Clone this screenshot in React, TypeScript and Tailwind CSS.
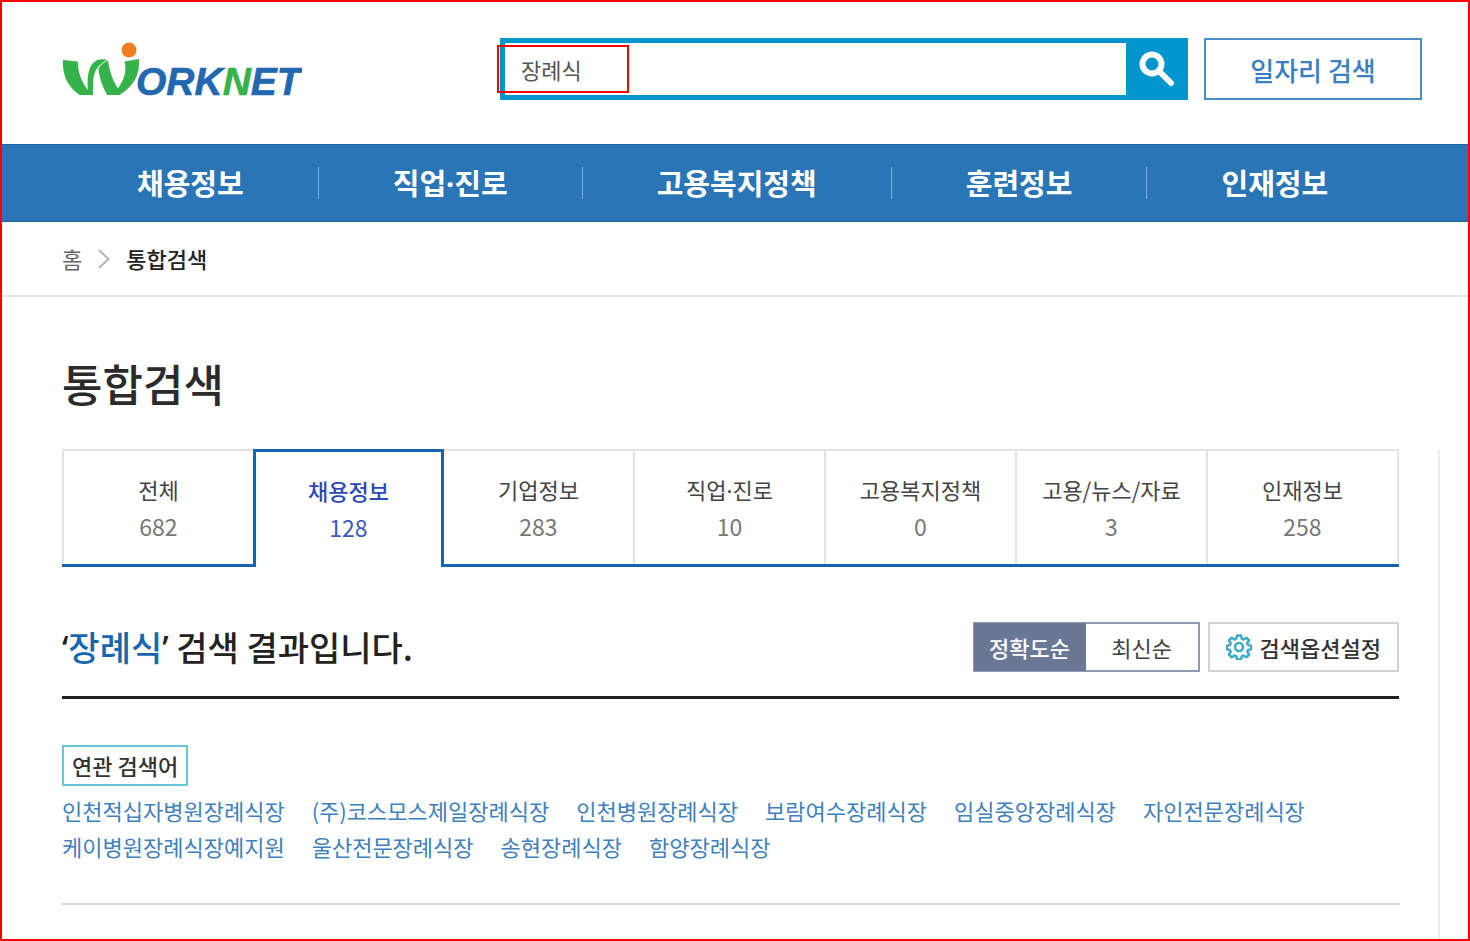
import React from 'react';

interface Tab {
  label: string;
  count: number;
}

const menus = ['채용정보', '직업·진로', '고용복지정책', '훈련정보', '인재정보'];

const tabs: Tab[] = [
  { label: '전체', count: 682 },
  { label: '채용정보', count: 128 },
  { label: '기업정보', count: 283 },
  { label: '직업·진로', count: 10 },
  { label: '고용복지정책', count: 0 },
  { label: '고용/뉴스/자료', count: 3 },
  { label: '인재정보', count: 258 },
];

const activeTab = '채용정보';

const related = [
  '인천적십자병원장례식장',
  '(주)코스모스제일장례식장',
  '인천병원장례식장',
  '보람여수장례식장',
  '임실중앙장례식장',
  '자인전문장례식장',
  '케이병원장례식장예지원',
  '울산전문장례식장',
  '송현장례식장',
  '함양장례식장',
];

const Logo: React.FC = () => (
  <svg width="240" height="60" viewBox="0 0 240 60" role="img" aria-label="WORKNET">
    <g fill="#36b24a">
      <path d="M1 18 L15.700 19.500 C16 30 19.500 40 26 48 C24.500 31 28 17.300 40 17.300 L45.500 17.800 C36.500 22.500 31.800 29 31.300 38 L31 53 L17.500 53 C5 44 0 32 1 18 Z" />
      <path d="M36.500 26.500 C38.500 23 41.500 20.500 46 18.500 C47.500 29 50.500 38 56 46.500 C62.500 37 65 29 62.500 19.500 L77 17 C78 33 72 44 57.500 53 L45 53 C40 43 37 35 36.500 26.500 Z" />
    </g>
    <circle cx="67" cy="8" r="7.500" fill="#f47b20" />
    <text x="74" y="53" fontFamily="Liberation Sans, sans-serif" fontSize="39" fontWeight="700" fontStyle="italic" fill="#2367b1" stroke="#2367b1" strokeWidth="0.600">
      ORK<tspan fill="#36b24a" stroke="#36b24a">N</tspan>ET
    </text>
  </svg>
);

const SearchIcon: React.FC = () => (
  <svg width="38" height="38" viewBox="0 0 38 38" fill="none" stroke="#fff" strokeLinecap="round" aria-hidden="true">
    <circle cx="14" cy="14" r="9.500" strokeWidth="6" />
    <path d="M22.500 22.500 L33 33" strokeWidth="6" />
  </svg>
);

const GearIcon: React.FC = () => (
  <svg width="26" height="26" viewBox="0 0 26 26" fill="none" stroke="#3fa9cc" strokeWidth="2.500" strokeLinejoin="round" aria-hidden="true">
    <path d="M11 1.500h4l.7 3.200 1.800.8 2.800-1.800 2.800 2.800-1.800 2.800.8 1.800 3.200.7v3.400l-3.200.7-.8 1.800 1.800 2.800-2.800 2.800-2.800-1.800-1.800.8-.7 3.200h-4l-.7-3.200-1.800-.8-2.800 1.800-2.800-2.800 1.800-2.800-.8-1.800-3.200-.7v-3.400l3.200-.7.8-1.800-1.800-2.800 2.800-2.800 2.800 1.800 1.800-.8z" />
    <circle cx="13" cy="13" r="4" />
  </svg>
);

// The CJK font draws a wide middle dot, so it is set in the Latin face
const Label: React.FC<{ text: string }> = ({ text }) => {
  const [head, tail] = text.split('·');
  if (!tail) return <>{text}</>;
  return (
    <>
      {head}
      <span className="font-['Noto_Sans',sans-serif] leading-none">·</span>
      {tail}
    </>
  );
};

const App: React.FC = () => {
  return (
    <div className="min-h-screen flex flex-col border-2 border-[#ff0000] bg-white text-[22px] text-[#444] font-['Noto_Sans_CJK_KR',sans-serif]">
      <header className="flex items-start pt-9 pb-[42px] pl-[60px] pr-[46px]">
        <a href="#" className="shrink-0 mt-1">
          <Logo />
        </a>
        <form className="relative flex flex-1 ml-[198px] h-[62px] border-[5px] border-r-0 border-[#0095cd]" onSubmit={(e) => e.preventDefault()}>
          <input type="text" aria-label="검색어" defaultValue="장례식" className="flex-1 min-w-0 px-4 text-[22px] text-[#555] outline-none" />
          <button type="submit" aria-label="검색" className="w-[62px] -my-[5px] flex items-center justify-center bg-[#0095cd]">
            <SearchIcon />
          </button>
          <span className="absolute -left-2 top-[2px] w-[132px] h-12 border-2 border-[#ff0000] pointer-events-none"></span>
        </form>
        <button type="button" className="ml-4 w-[218px] h-[62px] border-2 border-[#4a8fcb] text-[26px] font-medium text-[#3a7fc3]">
          일자리 검색
        </button>
      </header>

      <nav className="bg-[#2a75b5] border-y border-[#1e69aa]">
        <ul className="flex items-center h-[76px] pl-[61px]">
          {menus.map((menu, index) => (
            <li key={menu} className={`px-[74px] h-8 flex items-center ${index > 0 ? 'border-l border-[#7fadd4]' : ''}`}>
              <a href="#" className="text-[29px] font-bold text-white whitespace-nowrap">
                <Label text={menu} />
              </a>
            </li>
          ))}
        </ul>
      </nav>

      <div className="flex items-center h-[75px] px-[60px] border-b-2 border-[#e8e8e8]">
        <a href="#" className="text-[#666]">홈</a>
        <svg className="mx-4" width="12" height="20" viewBox="0 0 12 20" fill="none" stroke="#b5b5b5" strokeWidth="2" aria-hidden="true">
          <path d="M1 1 L10.500 10 L1 19" />
        </svg>
        <span className="font-medium text-[#222]">통합검색</span>
      </div>

      <h1 className="pt-[55px] pb-[34px] px-[60px] text-[44px] leading-[63px] font-medium text-[#2b2b2b]">통합검색</h1>

      <div className="flex flex-1">
        <main className="flex-1 min-w-0 pl-[60px] pr-[39px]">
          <ul className="flex">
            {tabs.map((tab, index) => {
              const active = tab.label === activeTab;
              return (
                <li key={tab.label} className={`flex-1 h-[118px] ${active ? '' : 'border-b-3 border-[#1565ab]'}`}>
                  <a
                    href="#"
                    className={`flex flex-col items-center h-full pt-5 leading-[37px] whitespace-nowrap ${active ? 'border-3 border-b-0 border-[#1565ab] font-medium text-[#2a49b8]' : 'border-t-2 border-[#e3e3e3]'} ${!active && index > 0 ? 'border-r-2' : ''} ${index === 0 ? 'border-l-2' : ''}`}
                  >
                    <span>
                      <Label text={tab.label} />
                    </span>
                    <span className={`text-[23px] font-normal ${active ? 'text-[#3f57c4]' : 'text-[#777]'}`}>{tab.count}</span>
                  </a>
                </li>
              );
            })}
          </ul>

          <div className="flex items-center justify-between mt-[55px] pb-6 border-b-3 border-[#222]">
            <h2 className="text-[34px] leading-[50px] font-medium text-[#222]">
              <span className="font-['Noto_Sans',sans-serif] leading-none">‘</span>
              <span className="text-[#1767b0]">장례식</span>
              <span className="font-['Noto_Sans',sans-serif] leading-none">’</span> 검색 결과입니다.
            </h2>
            <div className="flex gap-2">
              <div className="flex h-[50px] border-2 border-[#8e98ae]">
                <button type="button" className="w-28 -my-px -ml-px bg-[#6a7896] font-medium text-white">정확도순</button>
                <button type="button" className="w-28">최신순</button>
              </div>
              <button type="button" className="flex items-center gap-2 h-[50px] px-4 border-2 border-[#d3d3d3] font-medium text-[#333]">
                <GearIcon />
                검색옵션설정
              </button>
            </div>
          </div>

          <section className="pt-[46px] pb-[39px] border-b-2 border-[#d8d8d8]">
            <h3 className="w-fit px-2 h-[41px] leading-[37px] border-2 border-[#6cc3dc] font-medium text-[#333]">연관 검색어</h3>
            <ul className="flex flex-wrap gap-x-[27px] mt-[6px] leading-9">
              {related.map((word) => (
                <li key={word}>
                  <a href="#" className="text-[#3f80bd]">{word}</a>
                </li>
              ))}
            </ul>
          </section>
        </main>
        <aside className="w-[30px] border-l-2 border-[#ececec]"></aside>
      </div>
    </div>
  );
};

export default App;
